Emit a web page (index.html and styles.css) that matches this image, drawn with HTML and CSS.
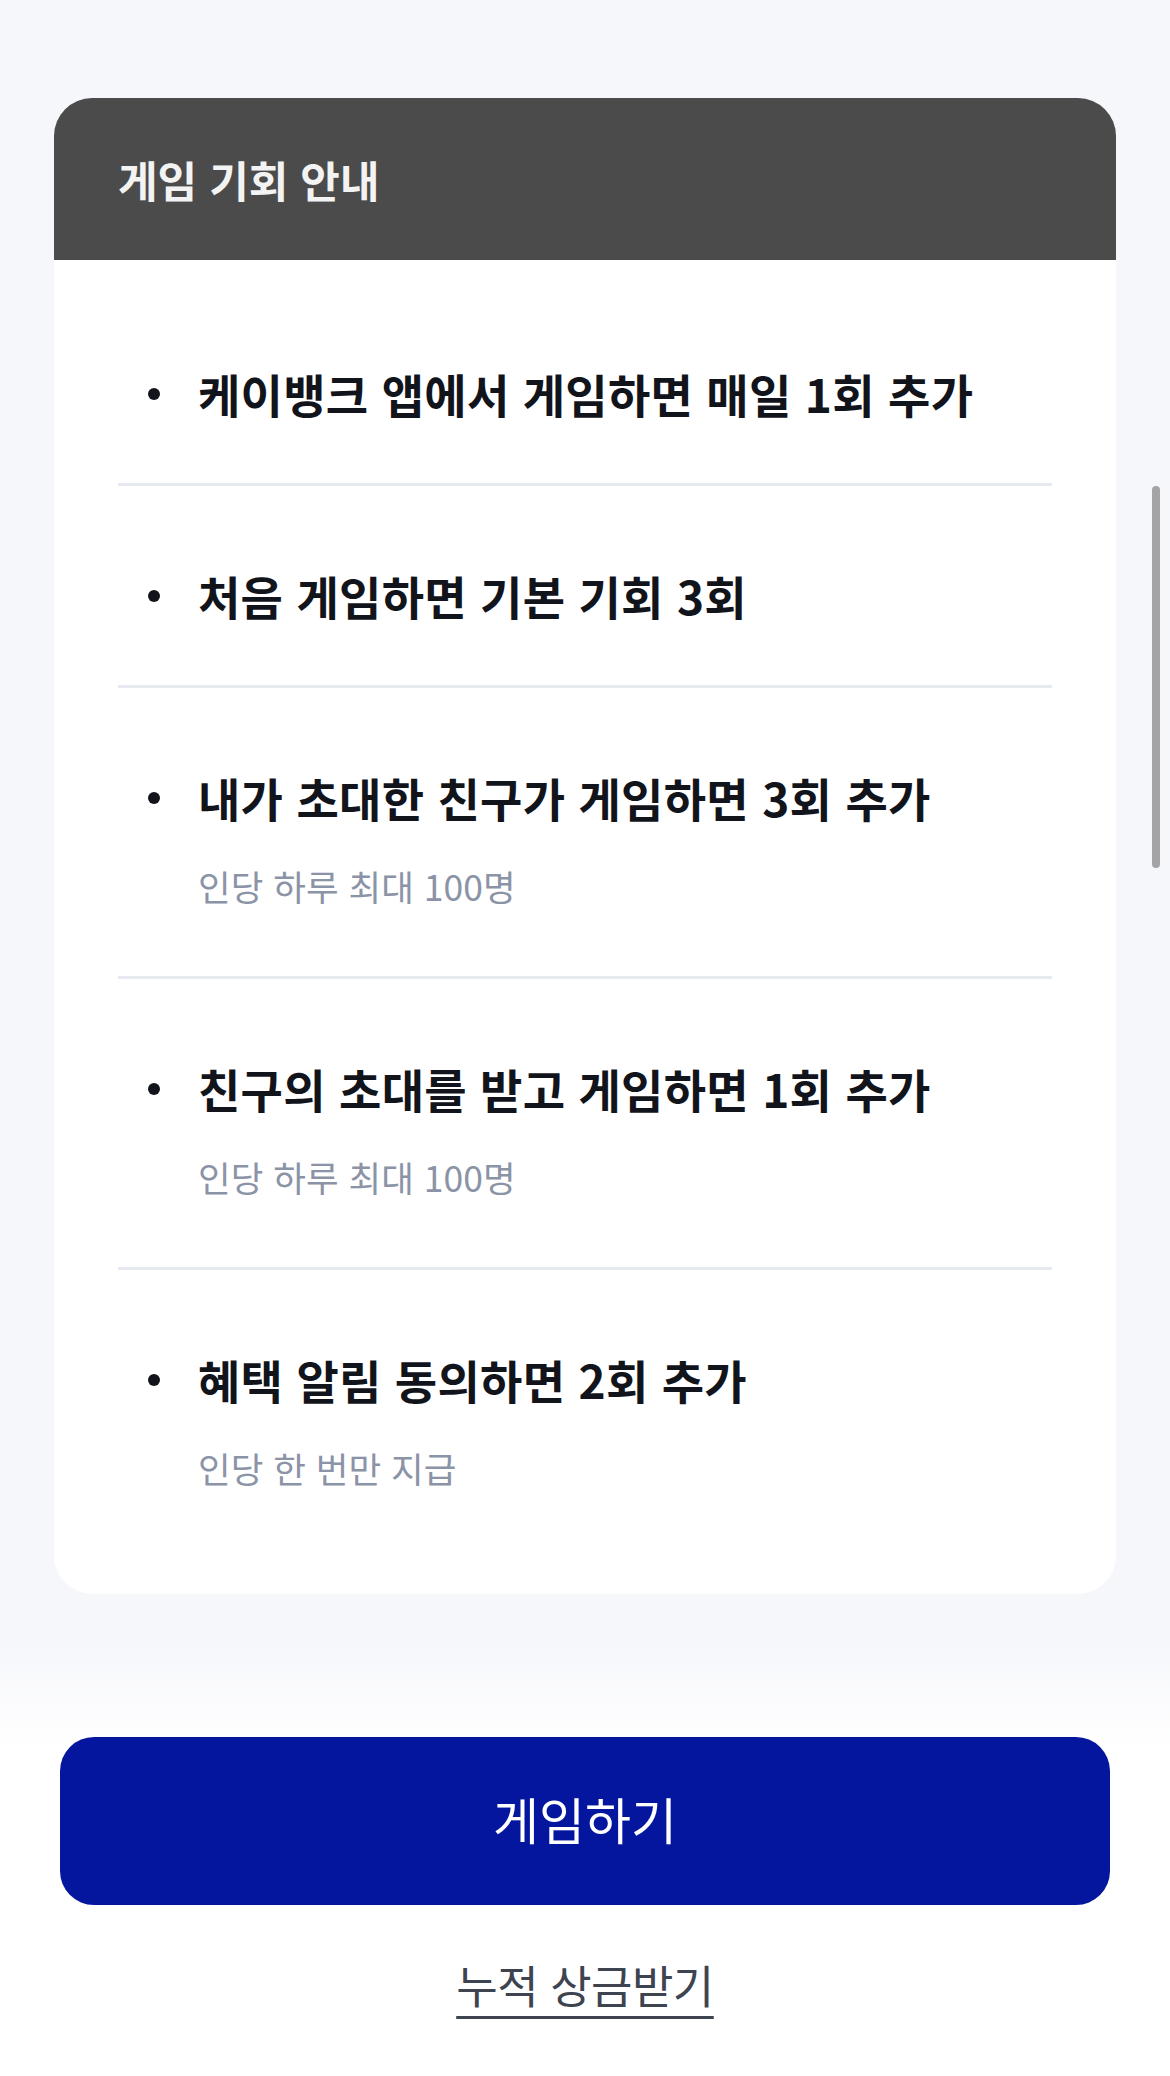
FILE: index.html
```html
<!DOCTYPE html>
<html lang="ko">
<head>
  <meta charset="UTF-8" />
  <meta name="viewport" content="width=device-width, initial-scale=1.0"/>
  <title>게임 기회 안내</title>
  <link rel="stylesheet" href="styles.css">
</head>
<body>
  <main class="page">
    <section class="card">
      <div class="card-head">게임 기회 안내</div>
      <ul class="chance-list">
        <li class="chance">
          <div class="chance-title"><span class="dot"></span>케이뱅크 앱에서 게임하면 매일 1회 추가</div>
        </li>
        <li class="chance">
          <div class="chance-title"><span class="dot"></span>처음 게임하면 기본 기회 3회</div>
        </li>
        <li class="chance">
          <div class="chance-title"><span class="dot"></span>내가 초대한 친구가 게임하면 3회 추가</div>
          <p class="chance-note">인당 하루 최대 100명</p>
        </li>
        <li class="chance">
          <div class="chance-title"><span class="dot"></span>친구의 초대를 받고 게임하면 1회 추가</div>
          <p class="chance-note">인당 하루 최대 100명</p>
        </li>
        <li class="chance">
          <div class="chance-title"><span class="dot"></span>혜택 알림 동의하면 2회 추가</div>
          <p class="chance-note">인당 한 번만 지급</p>
        </li>
      </ul>
    </section>
  </main>

  <footer class="bottom">
    <button class="play-btn">게임하기</button>
    <div class="prize-link">
      <a href="#">누적 상금받기</a>
    </div>
  </footer>

  <div class="scroll-thumb"></div>
</body>
</html>
```

FILE: styles.css
```css
body {
  font-family: "Noto Sans CJK KR", "Noto Sans", sans-serif;
  background-color: #f6f7fb;
  margin: 0;
  color: #12141c;
}
.page {
  padding: 98px 54px 0;
}
.card {
  background: white;
  border-radius: 38px;
  overflow: hidden;
}
.card-head {
  height: 162px;
  display: flex;
  align-items: center;
  padding-left: 64px;
  background-color: #4b4b4b;
  color: #f3f3f3;
  font-size: 43px;
  font-weight: 700;
}
.chance-list {
  list-style: none;
  margin: 0;
  padding: 24px 64px 36px;
}
.chance {
  padding: 79px 0 60px;
  border-bottom: 3px solid #e6e9f0;
}
.chance:last-child {
  border-bottom: none;
}
.chance-title {
  display: flex;
  align-items: center;
  font-size: 46px;
  line-height: 60px;
  font-weight: 700;
  letter-spacing: 0.3px;
}
.dot {
  width: 12px;
  height: 12px;
  border-radius: 50%;
  background: #12141c;
  margin: 2px 38px 0 30px;
  flex-shrink: 0;
}
.chance-note {
  margin: 29px 0 0 80px;
  font-size: 35.5px;
  line-height: 60px;
  color: #8b93a6;
}
.bottom {
  margin-top: 45px;
  padding: 98px 60px 62px;
  background: linear-gradient(rgba(255,255,255,0), #fff 110px);
  text-align: center;
}
.play-btn {
  display: block;
  width: 100%;
  height: 168px;
  padding: 0 0 6px;
  border: none;
  border-radius: 34px;
  background-color: #04169e;
  color: white;
  font-family: inherit;
  font-size: 50px;
  cursor: pointer;
}
.prize-link {
  margin-top: 52px;
  line-height: 56px;
}
.prize-link a {
  color: #3e4350;
  font-size: 45px;
  letter-spacing: -0.5px;
  text-decoration: underline;
  text-decoration-thickness: 3px;
  text-underline-offset: 12px;
}
.scroll-thumb {
  position: fixed;
  top: 486px;
  left: 1152px;
  width: 8px;
  height: 382px;
  border-radius: 4px;
  background-color: #a4a4a6;
}
```
